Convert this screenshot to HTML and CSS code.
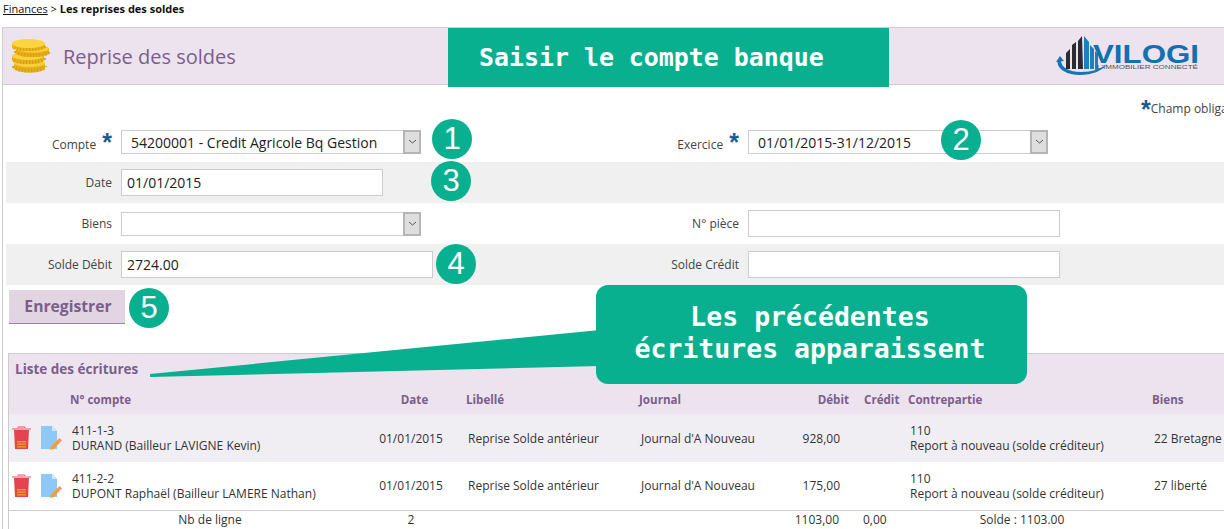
FILE: index.html
```html
<!DOCTYPE html>
<html lang="fr">
<head>
  <meta charset="UTF-8" />
  <title>Reprise des soldes</title>
  <link rel="stylesheet" href="styles.css">
</head>
<body>
  <div class="breadcrumb"><a href="#">Finances</a> &gt; <strong>Les reprises des soldes</strong></div>

  <div class="panel">
    <div class="panel-head">
      <svg class="coins" width="38" height="34" viewBox="0 0 38 34">
        <path d="M2 24v5c0 2.500 7 4.500 15.500 4.500S33 31.500 33 29v-5z" fill="#e8b21c"/>
        <path d="M2 27c0 2.500 7 4.500 15.500 4.500S33 29.500 33 27" fill="none" stroke="#d9a012" stroke-width="4" stroke-dasharray="1.500 1.500"/>
        <ellipse cx="17.500" cy="24" rx="15.500" ry="4" fill="#f9cf3a"/>
        <path d="M0 17v4c0 2.500 7 4 16 4s16-1.500 16-4v-4z" fill="#eab51e"/>
        <path d="M0 19c0 2.500 7 4 16 4s16-1.500 16-4" fill="none" stroke="#d9a012" stroke-width="4" stroke-dasharray="1.500 1.500"/>
        <ellipse cx="16" cy="17" rx="16" ry="4" fill="#fbd23e"/>
        <path d="M4 9v5c0 2.500 7 4 16.500 4S37 16.500 37 14V9z" fill="#e8b21c"/>
        <path d="M4 12c0 2.500 7 4 16.500 4S37 14.500 37 12" fill="none" stroke="#d9a012" stroke-width="4" stroke-dasharray="1.500 1.500"/>
        <ellipse cx="20.500" cy="9.500" rx="16.500" ry="4" fill="#f9cf3a"/>
        <path d="M0 4v4c0 2.500 7 4 16.500 4S33 10.500 33 8V4z" fill="#eeb920"/>
        <path d="M0 6.500c0 2.500 7 4 16.500 4S33 9 33 6.500" fill="none" stroke="#d9a012" stroke-width="3" stroke-dasharray="1.500 1.500"/>
        <ellipse cx="16.500" cy="4.500" rx="16.500" ry="4.500" fill="#fcd440"/>
      </svg>
      <h1>Reprise des soldes</h1>
      <svg class="logo" width="144" height="42" viewBox="0 0 144 42">
        <path d="M2 24c-3 9 8 16 22 16 12 0 22-4 27-11-6 5-15 8-26 8C13 37 4 32 5 24z" fill="#1475b3"/>
        <path d="M0 27l4-6 4 5z" fill="#1475b3"/>
        <path d="M10 34V18l4-4v20zM16 34V10l4-3v27zM22 34V6l4-5 1 33z" fill="#2b2b30"/>
        <path d="M28 34V1l5 6v27zM34 34V10l4 4v20zM39 35V16l3 3v16z" fill="#1d7fbc"/>
        <text class="logo-name" x="37" y="27.500" textLength="106" lengthAdjust="spacingAndGlyphs">VILOGI</text>
        <text class="logo-sub" x="41" y="33.500" textLength="101" lengthAdjust="spacingAndGlyphs">L'IMMOBILIER CONNECTÉ</text>
      </svg>
    </div>

    <div class="required"><span class="star">*</span>Champ obligatoire</div>

    <div class="form-row">
      <div class="field">
        <label class="label-req">Compte <span class="star">*</span></label>
        <div class="select">
          <select><option>54200001 - Credit Agricole Bq Gestion</option></select>
          <span class="select-btn"><svg width="9" height="5" viewBox="0 0 9 5"><path d="M1 1l3.500 3L8 1" fill="none" stroke="#555"/></svg></span>
        </div>
      </div>
      <div class="field field-right">
        <label class="label-req">Exercice <span class="star">*</span></label>
        <div class="select">
          <select><option>01/01/2015-31/12/2015</option></select>
          <span class="select-btn"><svg width="9" height="5" viewBox="0 0 9 5"><path d="M1 1l3.500 3L8 1" fill="none" stroke="#555"/></svg></span>
        </div>
      </div>
    </div>

    <div class="form-row grey">
      <div class="field">
        <label>Date</label>
        <input type="text" class="input-date" value="01/01/2015" />
      </div>
    </div>

    <div class="form-row">
      <div class="field">
        <label>Biens</label>
        <div class="select">
          <select><option></option></select>
          <span class="select-btn"><svg width="9" height="5" viewBox="0 0 9 5"><path d="M1 1l3.500 3L8 1" fill="none" stroke="#555"/></svg></span>
        </div>
      </div>
      <div class="field field-right">
        <label>N° pièce</label>
        <input type="text" />
      </div>
    </div>

    <div class="form-row grey">
      <div class="field">
        <label>Solde Débit</label>
        <input type="text" value="2724.00" />
      </div>
      <div class="field field-right">
        <label>Solde Crédit</label>
        <input type="text" />
      </div>
    </div>

    <button class="btn-save">Enregistrer</button>

    <div class="list">
      <h2>Liste des écritures</h2>
      <table>
        <colgroup>
          <col class="c-icons"><col class="c-compte"><col class="c-date"><col class="c-libelle">
          <col class="c-journal"><col class="c-debit"><col class="c-credit"><col class="c-contre"><col class="c-biens">
        </colgroup>
        <thead>
          <tr>
            <th></th>
            <th>N° compte</th>
            <th class="t-date">Date</th>
            <th class="t-libelle">Libellé</th>
            <th>Journal</th>
            <th class="t-debit">Débit</th>
            <th class="t-credit">Crédit</th>
            <th>Contrepartie</th>
            <th>Biens</th>
          </tr>
        </thead>
        <tbody>
          <tr class="odd">
            <td class="icons">
              <svg width="20" height="24" viewBox="0 0 20 24"><path d="M6 2V1h7v1M0 3h19" fill="none" stroke="#e8525c"/><path d="M2 4h15l-1 19H3z" fill="#e5444f"/><path d="M5 15h9v1.500H5zM5 17.500h9V19H5zM5 20h9v1.500H5z" fill="#f0913a"/></svg>
              <svg width="21" height="24" viewBox="0 0 21 24"><path d="M0 0h11l5 5v18H0z" fill="#8ec8f8"/><path d="M11 0l5 5h-5z" fill="#cfe7fb"/><path d="M9 24l1-3.500 7-7 2.500 2.500-7 7z" fill="#f0a030"/><path d="M17 13.500l1.500-1.500 2.500 2.500-1.500 1.500z" fill="#e8908a"/></svg>
            </td>
            <td>411-1-3<br>DURAND (Bailleur LAVIGNE Kevin)</td>
            <td class="center">01/01/2015</td>
            <td class="t-libelle">Reprise Solde antérieur</td>
            <td>Journal d'A Nouveau</td>
            <td class="t-debit">928,00</td>
            <td></td>
            <td>110<br>Report à nouveau (solde créditeur)</td>
            <td>22 Bretagne</td>
          </tr>
          <tr>
            <td class="icons">
              <svg width="20" height="24" viewBox="0 0 20 24"><path d="M6 2V1h7v1M0 3h19" fill="none" stroke="#e8525c"/><path d="M2 4h15l-1 19H3z" fill="#e5444f"/><path d="M5 15h9v1.500H5zM5 17.500h9V19H5zM5 20h9v1.500H5z" fill="#f0913a"/></svg>
              <svg width="21" height="24" viewBox="0 0 21 24"><path d="M0 0h11l5 5v18H0z" fill="#8ec8f8"/><path d="M11 0l5 5h-5z" fill="#cfe7fb"/><path d="M9 24l1-3.500 7-7 2.500 2.500-7 7z" fill="#f0a030"/><path d="M17 13.500l1.500-1.500 2.500 2.500-1.500 1.500z" fill="#e8908a"/></svg>
            </td>
            <td>411-2-2<br>DUPONT Raphaël (Bailleur LAMERE Nathan)</td>
            <td class="center">01/01/2015</td>
            <td class="t-libelle">Reprise Solde antérieur</td>
            <td>Journal d'A Nouveau</td>
            <td class="t-debit">175,00</td>
            <td></td>
            <td>110<br>Report à nouveau (solde créditeur)</td>
            <td>27 liberté</td>
          </tr>
        </tbody>
        <tfoot>
          <tr>
            <td colspan="2" class="t-count">Nb de ligne</td>
            <td class="center">2</td>
            <td colspan="2"></td>
            <td class="t-total">1103,00</td>
            <td class="t-credit">0,00</td>
            <td class="t-solde">Solde : 1103.00</td>
            <td></td>
          </tr>
        </tfoot>
      </table>
    </div>
  </div>

  <!-- annotations par dessus la capture -->
  <div class="banner">Saisir le compte banque</div>
  <svg class="tail" width="450" height="50" viewBox="0 0 450 50"><path d="M0 44L450 0v36L0 47z" fill="#08b08f"/></svg>
  <div class="bubble">Les précédentes<br>écritures apparaissent</div>
  <span class="badge b1">1</span>
  <span class="badge b2">2</span>
  <span class="badge b3">3</span>
  <span class="badge b4">4</span>
  <span class="badge b5">5</span>
</body>
</html>
```

FILE: styles.css
```css
html, body {
  margin: 0;
  height: 529px;
  overflow: hidden;
}
body {
  position: relative;
  width: 1224px;
  background: #fff;
  font-family: "Open Sans", sans-serif;
  font-size: 12px;
  color: #333;
}

.breadcrumb {
  height: 27px;
  padding: 1px 0 0 3px;
  box-sizing: border-box;
  font-size: 11px;
  line-height: 15px;
  color: #111;
  white-space: nowrap;
}
.breadcrumb a {
  color: #111;
}

.panel {
  margin-left: 2px;
  border-left: 1px solid #ccc;
  height: 502px;
}
.panel-head {
  display: flex;
  align-items: center;
  height: 56px;
  background: #ede3ef;
  border-top: 1px solid #ccc;
  border-bottom: 1px solid #ccc;
  padding: 0 24px 0 9px;
}
.coins {
  margin-right: 13px;
}
.panel-head h1 {
  margin: 0;
  font-size: 20px;
  font-weight: 400;
  color: #7a5e8c;
  flex: 1;
}
.logo-name {
  font-family: "Liberation Sans", sans-serif;
  font-size: 26px;
  font-weight: bold;
  fill: #1170ad;
}
.logo-sub {
  font-family: "Liberation Sans", sans-serif;
  font-size: 5.500px;
  fill: #555;
}

.required {
  height: 36px;
  padding: 10px 0 0 1138px;
  box-sizing: border-box;
  white-space: nowrap;
  line-height: 28px;
  color: #444;
}

.star {
  font-family: "Liberation Sans", sans-serif;
  font-size: 25px;
  font-weight: bold;
  line-height: 10px;
  vertical-align: -5px;
  color: #1d5b8f;
}
.label-req {
  padding-top: 6px;
}
.label-req .star {
  margin-left: 3px;
  vertical-align: -2px;
}

.form-row {
  display: flex;
  align-items: center;
  height: 41px;
  margin-left: 3px;
}
.form-row.grey {
  background: #f0f0f0;
}
.field {
  display: flex;
  align-items: center;
  width: 500px;
}
.field label {
  width: 106px;
  margin-right: 9px;
  text-align: right;
  color: #444;
  white-space: nowrap;
}
.field-right label {
  width: 233px;
}
.field-right {
  width: 700px;
}

input[type="text"] {
  width: 312px;
  height: 27px;
  box-sizing: border-box;
  padding: 0 5px 1px;
  border: 1px solid #ccc;
  background: #fff;
  font-family: "Open Sans", sans-serif;
  font-size: 14px;
  color: #222;
}
input.input-date {
  width: 262px;
}

.select {
  display: flex;
  width: 300px;
  height: 24px;
  box-sizing: border-box;
  border: 1px solid #ccc;
  background: #fff;
}
.select select {
  flex: 1;
  min-width: 0;
  border: none;
  padding: 1px 0 0 9px;
  appearance: none;
  background: transparent;
  font-family: "Open Sans", sans-serif;
  font-size: 14px;
  color: #222;
}
.select-btn {
  display: flex;
  align-items: center;
  justify-content: center;
  width: 14px;
  margin: -1px -1px -1px 0;
  background: #dedede;
  border: 2px solid #b5b5b5;
}

.btn-save {
  display: block;
  width: 116px;
  height: 34px;
  margin: 5px 0 29px 6px;
  padding: 0 0 2px 2px;
  border: none;
  border-bottom: 1px solid #b86cd0;
  background: #e1d5e1;
  font-family: "Open Sans", sans-serif;
  font-size: 15.700px;
  font-weight: 700;
  color: #7a5e8c;
}

.list {
  margin-left: 5px;
  border-left: 1px solid #ccc;
  border-top: 1px solid #ccc;
  background: #fff;
  height: 176px;
}
.list h2 {
  margin: 0;
  height: 30px;
  padding: 6px 0 0 6px;
  box-sizing: border-box;
  background: #ede3ef;
  font-size: 13.500px;
  line-height: 18px;
  font-weight: 700;
  color: #7a5e8c;
}

table {
  width: 1215px;
  table-layout: fixed;
  border-collapse: collapse;
}
.c-icons { width: 61px; }
.c-compte { width: 295px; }
.c-date { width: 90px; }
.c-libelle { width: 184px; }
.c-journal { width: 121px; }
.c-debit { width: 95px; }
.c-credit { width: 53px; }
.c-contre { width: 244px; }
.c-biens { width: 72px; }

th {
  height: 30px;
  padding: 0;
  background: #ede3ef;
  text-align: left;
  font-size: 11.600px;
  font-weight: 700;
  color: #7a5e8c;
}
td {
  padding: 0 0 0 2px;
  line-height: 15px;
  white-space: nowrap;
  overflow: hidden;
}
tbody tr {
  height: 48px;
}
tbody tr.odd {
  background: #f1eef3;
}
tfoot td {
  border-top: 1px solid #ccc;
  height: 18px;
}

.center {
  text-align: center;
}
th.t-date {
  text-align: center;
  padding-left: 9px;
}
th.t-libelle {
  padding-left: 11px;
}
td.t-libelle {
  padding-left: 13px;
}
th.t-debit {
  text-align: right;
  padding-right: 6px;
}
td.t-debit {
  text-align: right;
  padding-right: 15px;
}
td.t-total {
  text-align: right;
  padding-right: 16px;
}
th.t-credit {
  padding-left: 9px;
}
td.t-credit {
  padding-left: 8px;
}
.t-count {
  text-align: center;
  padding-left: 46px;
}
.t-solde {
  text-align: center;
  padding-right: 18px;
}
td.icons {
  padding: 0 0 0 3px;
}
td.icons svg {
  vertical-align: middle;
  margin-right: 6px;
}

/* annotations */
.banner {
  position: absolute;
  left: 448px;
  top: 28px;
  width: 441px;
  height: 59px;
  box-sizing: border-box;
  padding-left: 31px;
  background: #08b08f;
  font-family: "DejaVu Sans Mono", monospace;
  font-size: 24.900px;
  font-weight: bold;
  line-height: 59px;
  color: #fff;
  white-space: nowrap;
}
.bubble {
  position: absolute;
  left: 596px;
  top: 285px;
  width: 431px;
  height: 99px;
  box-sizing: border-box;
  padding: 16px 3px 0 0;
  border-radius: 12px;
  background: #08b08f;
  font-family: "DejaVu Sans Mono", monospace;
  font-size: 26.500px;
  font-weight: bold;
  line-height: 32px;
  color: #fff;
  text-align: center;
  white-space: nowrap;
}
.tail {
  position: absolute;
  left: 150px;
  top: 330px;
}
.badge {
  position: absolute;
  width: 40px;
  height: 40px;
  border-radius: 50%;
  background: #08b08f;
  font-family: "Liberation Sans", sans-serif;
  font-size: 31px;
  line-height: 40px;
  color: #fff;
  text-align: center;
}
.b1 { left: 432px; top: 119px; }
.b2 { left: 941px; top: 120px; }
.b3 { left: 431px; top: 161px; }
.b4 { left: 436px; top: 244px; }
.b5 { left: 129px; top: 288px; }
```
